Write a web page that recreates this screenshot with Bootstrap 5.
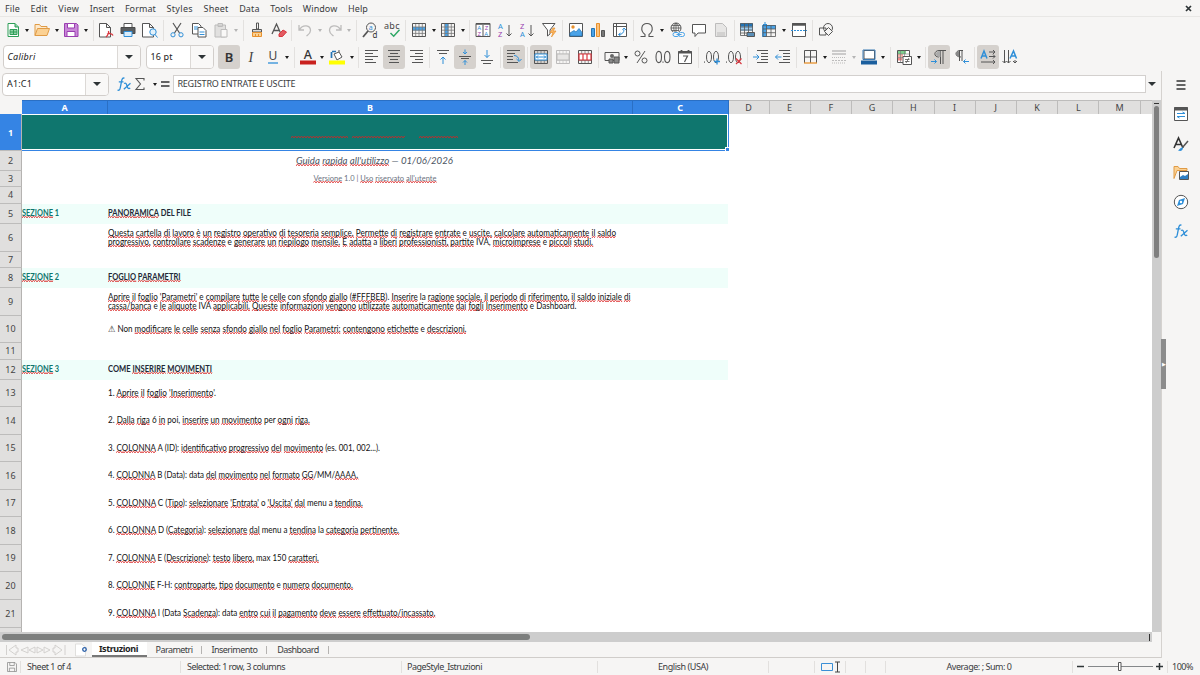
<!DOCTYPE html>
<html lang="it">
<head>
  <meta charset="UTF-8" />
  <meta name="viewport" content="width=device-width, initial-scale=1.0"/>
  <title>Registro entrate e uscite</title>
  <link href="https://cdn.jsdelivr.net/npm/bootstrap@5.3.3/dist/css/bootstrap.min.css" rel="stylesheet"/>
  <style>
    body {
      width: 1200px;
      height: 675px;
      background: #f6f5f4;
      color: #3a3c3e;
      font: 9px/12px "Noto Sans", sans-serif;
    }
    svg { display: block; flex: none; overflow: visible; }
    .menu-bar { height: 16px; padding: 1px 0 0 5px; }
    .menu-bar .menus { gap: 10.6px; }
    .tool-row { height: 27px; padding-left: 1.5px; }
    .tool-row.first { border-top: 1px solid #e8e7e5; }
    .format-row { height: 28px; }
    .tool { width: 22px; height: 24px; border-radius: 3px; flex: none; }
    .tool.on { background: #d5d1cd; }
    .tool.dim { opacity: .35; }
    .caret { width: 7.4px; flex: none; }
    .caret::after, .drop::after {
      content: "";
      border: 2.5px solid transparent;
      border-top: 3px solid #1c1c1c;
      border-bottom: 0;
    }
    .caret.dim::after { border-top-color: #b5b5b5; }
    .drop::after { border-width: 4px; border-top-width: 4.5px; border-top-color: #2e3436; border-bottom: 0; }
    .vsep { width: 4.9px; height: 21px; flex: none; }
    .vsep::after { content: ""; width: 1px; height: 100%; background: #e3e1df; }
    .caret + .vsep { margin-left: .9px; }
    .combo { height: 24px; background: #fff; border: 1px solid #d2cecb; border-radius: 4px; color: #222; overflow: hidden; }
    .combo .drop { width: 23px; height: 100%; background: #f9f8f7; border-left: 1px solid #dcd9d6; }
    .font-box { width: 138px; margin: 0 5px 0 1px; }
    .size-box { width: 68px; margin-right: 4px; }
    .name-box { width: 107px; height: 23px; margin-right: 4px; }
    .formula-bar { height: 29px; padding: 0 0 3px 2px; }
    .sum-tools { margin-left: -6px; }
    .sum-tools .tool:last-child { width: 14px; }
    .formula-input { width: 973px; height: 18px; background: #fff; border: 1px solid #d3d0ce; padding-left: 3px; margin-left: 1px; }
    .main-area { width: 1161px; flex: none; }
    .side-bar { width: 39px; border-left: 1px solid #d5d2cf; padding-top: 6px; gap: 13.3px; }
    .grip { left: 1161px; top: 339px; width: 5px; height: 50px; background: #8c8c8c; color: #fff; font-size: 5px; }
    .sheet { width: 1152px; height: 532px; overflow: hidden; background: #fff; }
    .col-heads { height: 14px; flex: none; }
    .col-heads div { background: #e0dfde; border-right: 1px solid #bdbcbb; border-top: 1px solid #bdbcbb; color: #444; flex: none; }
    .col-heads .corner { width: 22px; background: #f6f5f4; border: 0; }
    .col-heads .sel { background: #3584e4; color: #fff; font-weight: 700; border-color: #2a6fc4; }
    .grid-row { flex: none; }
    .row-head { width: 22px; background: #e0dfde; border-right: 1px solid #b5b3b1; border-bottom: 1px solid #bdbcbb; padding-top: 1px; color: #444; flex: none; }
    .row-head.sel { background: #3584e4; color: #fff; font-weight: 700; }
    .cell-a { width: 86px; padding-bottom: 1.5px; flex: none; }
    .cell-b { width: 620px; padding-bottom: 2px; flex: none; }
    .merged { width: 706px; flex: none; }
    .cells { font: 8.8px/9px Lato, Carlito, sans-serif; color: #111; white-space: pre; }
    .section .cell-a, .section .cell-b { background: #effefa; color: #1f2937; font-weight: 700; }
    .section .cell-a { color: #0f766e; }
    .title-cell { background: #0f766e; border: 1px solid #fff; border-left: 0; box-shadow: 0 1px 0 #3584e4, 1px 0 0 #3584e4; margin-bottom: 1px; }
    .handle { right: -3px; bottom: -3px; width: 5px; height: 5px; background: #3584e4; border: 1px solid #fff; }
    .subtitle { font-size: 9.8px; font-style: italic; color: #4b5563; padding-right: 1px; }
    .version { font-size: 8.2px; color: #6b7280; }
    .typo {
      background: url("data:image/svg+xml,%3Csvg xmlns='http://www.w3.org/2000/svg' width='3' height='2'%3E%3Cpath d='M-.5 2L1.5.4 3.500 2' fill='none' stroke='%23d92020' stroke-width='1'/%3E%3C/svg%3E") repeat-x left bottom / 3px 2px;
    }
    .title-cell .typo { height: 3px; margin-top: 9px; flex: none; }
    .v-track { width: 9px; background: #cdcdcd; padding: 3px 2px 0; }
    .v-track .stop { width: 5px; height: 1px; background: #333; }
    .v-track .thumb { height: 152px; margin-top: 2px; background: #7f7f7f; border-radius: 3px; }
    .h-track { width: 1152px; height: 10px; background: #cdcdcd; padding: 2px; }
    .h-track .thumb { width: 528px; height: 6px; background: #7d7f7e; border-radius: 3px; }
    .h-track .stop { width: 1px; height: 7px; background: #333; }
    .tab-row { height: 16px; border-bottom: 1px solid #d0cdca; }
    .tab-row .tab { padding: 0 9.9px; height: 15px; position: relative; }
    .tab-row .tab + .tab::after { content: ""; position: absolute; right: 0; top: 4px; width: 1px; height: 8px; background: #b5b3b1; }
    .tab-row .tab.now { background: #fff; border-bottom: 2px solid #777; font-weight: 700; color: #1e1e1e; padding: 1px 8.500px 0 7px; }
    .tab-row .tab.now + .tab { padding-left: 9px; padding-right: 9px; }
    .status-row { height: 17px; }
    .status-row > div { border-right: 1px solid #e2e0de; height: 12px; flex: none; }
  </style>
</head>
<body class="d-flex flex-column overflow-hidden m-0">

<div class="menu-bar d-flex justify-content-between align-items-center">
  <div class="menus d-flex">
    <span data-w="15">File</span><span data-w="17">Edit</span><span data-w="21">View</span>
    <span data-w="24.5">Insert</span><span data-w="31">Format</span><span data-w="26.5">Styles</span>
    <span data-w="25">Sheet</span><span data-w="20.5">Data</span><span data-w="22">Tools</span>
    <span data-w="34.5">Window</span><span data-w="20">Help</span>
  </div>
  <svg class="me-2" width="7" height="7" viewBox="0 0 7 7"><path d="M1 1l5 5M6 1L1 6" stroke="#2e3436" stroke-width="1.7"/></svg>
</div>

<div class="tool-row first d-flex align-items-center" data-tools="new v open v save v | pdf print preview | cut copy paste- v- | clone clear | undo- v- redo- v- | find spell | rows v cols v | sortdlg asc desc filter | image chart pivot | omega v link comment header- | parea freeze v split | shapes"></div>

<div class="tool-row format-row d-flex align-items-center">
  <div class="combo font-box d-flex align-items-center justify-content-between">
    <span class="ps-1 fst-italic"><span data-w="28">Calibri</span></span>
    <span class="drop d-flex align-items-center justify-content-center"></span>
  </div>
  <div class="combo size-box d-flex align-items-center justify-content-between">
    <span class="ps-1"><span data-w="22">16 pt</span></span>
    <span class="drop d-flex align-items-center justify-content-center"></span>
  </div>
  <div class="d-flex align-items-center" data-tools="bold+ italic under v | fcolor v hcolor v | left center+ right | top middle+ bottom | wrap+ | merge+ unmerge- mergered | money v percent number date | adddec deldec | indent outdent | borders v lstyle- v- bcolor v | cond v | ltr+ rtl | hdir+ vdir"></div>
</div>

<div class="d-flex flex-grow-1">
  <div class="main-area">
    <div class="formula-bar d-flex align-items-center">
      <div class="combo name-box d-flex align-items-center justify-content-between">
        <span class="ps-1"><span data-w="25">A1:C1</span></span>
        <span class="drop d-flex align-items-center justify-content-center"></span>
      </div>
      <div class="d-flex align-items-center" data-tools="fx"></div>
      <div class="sum-tools d-flex align-items-center" data-tools="sigma v equals"></div>
      <div class="formula-input d-flex align-items-center"><span data-w="118">REGISTRO ENTRATE E USCITE</span></div>
      <span class="drop d-flex justify-content-center" style="width:12px"></span>
    </div>
    <div class="d-flex">
      <div class="sheet d-flex flex-column">
        <div class="col-heads d-flex" id="colHeads"></div>
        <div id="gridRows"></div>
      </div>
      <div class="v-track"><div class="stop"></div><div class="thumb"></div></div>
    </div>
    <div class="h-track d-flex justify-content-between align-items-center"><div class="thumb"></div><div class="stop"></div></div>
    <div class="tab-row d-flex align-items-center">
      <svg width="92" height="15" viewBox="0 0 92 15" fill="none" stroke="#cfcdcb" stroke-width=".9">
        <path d="M6.500 3v10M16 3l-7 5 7 5v-3h2V6h-2zM28 5l-7 3 7 3zM35 5l-6 3 6 3zM37 5l6 3-6 3zM44 5l6 3-6 3zM55 3l7 5-7 5v-3h-2V6h2zM65 3v10"/>
        <path d="M75.500 2h6l4 3v9h-10z" fill="#fff" stroke="#dddbd9"/><circle cx="84.500" cy="7.500" r="1.800" stroke="#2a5fa8" stroke-width="1.300"/>
      </svg>
      <div class="tab now d-flex align-items-center"><span data-w="39">Istruzioni</span></div>
      <div class="tab d-flex align-items-center"><span data-w="37">Parametri</span></div>
      <div class="tab d-flex align-items-center"><span data-w="46">Inserimento</span></div>
      <div class="tab d-flex align-items-center"><span data-w="41.5">Dashboard</span></div>
    </div>
  </div>
  <div class="side-bar d-flex flex-column align-items-center" id="sideBar"></div>
</div>
<div class="grip position-absolute d-flex align-items-center justify-content-center">▶</div>

<div class="status-row d-flex align-items-center">
  <div class="d-flex align-items-center" style="width:21px;padding-left:6px" id="saveState"></div>
  <div style="width:160px;padding-left:6px"><span data-w="44">Sheet 1 of 4</span></div>
  <div style="width:221px;padding-left:6px"><span data-w="98">Selected: 1 row, 3 columns</span></div>
  <div style="width:196px;padding-left:5px"><span data-w="75">PageStyle_Istruzioni</span></div>
  <div class="text-center" style="width:171px"><span data-w="50">English (USA)</span></div>
  <div style="width:46px"></div>
  <div class="d-flex align-items-center justify-content-center" style="width:31px">
    <svg width="20" height="12" viewBox="0 0 20 12" fill="none"><path d="M1.500 2.500h11v7h-11z" stroke="#3a8fd6"/><path d="M15 1h5M15 11h5M17.500 1v10" stroke="#444"/></svg>
  </div>
  <div style="width:20px"></div>
  <div style="width:20px"></div>
  <div class="text-center" style="width:187px"><span data-w="65">Average: ; Sum: 0</span></div>
  <div class="d-flex align-items-center" style="width:95px;padding-left:4px">
    <svg width="86" height="9" viewBox="0 0 86 9" fill="none"><path d="M0 4.500h7M79 4.500h7M82.500 1v7" stroke="#2e3436" stroke-width="1.500"/><path d="M11 4.500h65" stroke="#85888a"/><path d="M41.500 .5h2.500v8h-2.500z" fill="#fff" stroke="#555"/></svg>
  </div>
  <span class="ps-1"><span data-w="21">100%</span></span>
</div>

<script>
  const k = 'stroke="#555"', b = 'stroke="#2f8fd8"', r = 'stroke="#d9363e"', o = 'stroke="#e8912d"';
  const p = (d, s) => `<path d="${d}" ${s}/>`;
  const t = (x, y, size, fill, text, more = '') => `<text x="${x}" y="${y}" font-size="${size}" fill="${fill}" stroke="none" ${more}>${text}</text>`;
  const lines = (x1, x2) => x1.map((x, i) => p(`M${x} ${1.5 + i * 3}H${x2[i]}`, k)).join('');
  const grid = p('M4.700 1.500v13M8 1.500v13M11.300 1.500v13M1.500 5h13M1.500 8.200h13M1.500 11.400h13', 'stroke="#777" stroke-width=".8"') + p('M1.500 1.500h13v13h-13z', k);
  const page = (x = 1) => p(`M${x + .5} 1.500h7l4 4v9.500h-11zM${x + 7.500} 1.500v4h4`, k + ' fill="#fff"');

  const icons = {
    new: p('M3 1.500h7l3.500 3.500v9.500H3z', 'stroke="#2f9e58" fill="#fff"') + p('M10 1.500v3.500h3.500', 'stroke="#2f9e58" fill="#8fd3a6"') + p('M5 7.500h7v5H5zM5 10h7M8.500 7.500v5', 'stroke="#2f9e58" fill="#8fd3a6"'),
    open: p('M1 13.500v-11h4.500l1.500 2h6v2', 'stroke="#e09b45" fill="#fde9cc"') + p('M1 13.500l2.500-7h12l-2.500 7z', 'stroke="#e09b45" fill="#fbd193"'),
    save: p('M1.500 1.500h12l1.500 1.500v11.500H1.500z', 'stroke="#9a3fb0" fill="#c987d8"') + p('M4.500 1.500h7v4.500h-7zM4 9.500h8v5H4z', 'stroke="#9a3fb0" fill="#fff"'),
    pdf: page() + p('M8 15c2-2 3-4 2.500-6M9 12c2-1 5-.5 6 1.500', r + ' stroke-width="1.300"'),
    print: p('M4 5.500v-4h8v4', k + ' fill="#fff"') + p('M1 5.500h14v6H1z', 'stroke="#4a4a4a" fill="#5a5d5f"') + p('M4 9.500h8v5H4z', b + ' fill="#d9ecfa"'),
    preview: page(0) + `<circle cx="11" cy="10" r="3.200" ${b} fill="#e2f1fb"/>` + p('M13 12.500l2.500 3', b),
    cut: p('M4 1l6.500 10M12 1L5.500 11', k + ' stroke-width="1.200"') + `<circle cx="4" cy="12.800" r="2.100" ${b}/><circle cx="12" cy="12.800" r="2.100" ${b}/>`,
    copy: p('M1.500 1.500h6l2.500 2.500v8H1.500z', k + ' fill="#fff"') + p('M3 5h4M3 7h4', b) + p('M7 5.500h5l3 3v6.500H7z', k + ' fill="#fff"') + p('M8.500 10h5M8.500 12.500h5', b),
    paste: p('M2 3h10.500v12H2z', k + ' fill="#bbb"') + p('M5 1.500h4.500v3H5z', k) + p('M8 7.500h6v7.500H8z', k + ' fill="#fff"'),
    clone: p('M7.500 1h2v6h-2z', k) + p('M3.500 7.500h9v2.500h-9z', k + ' fill="#ddd"') + p('M3.500 10.500h9v4h-9zM6.500 12v2.500M9.500 12v2.500', o + ' fill="#fbd193"'),
    clear: p('M1 12L5.500 2 10 12M2.500 8.500h6', k + ' stroke-width="1.300"') + p('M8 12l4-4 3.500 2-4 4.500H8z', 'stroke="#d9363e" fill="#e35b62"'),
    undo: p('M2 3v5h5M2.500 7.500C6 2 13.500 3 13.500 8.500c0 3-2 4-4 5.500', k + ' stroke-width="1.300"'),
    redo: p('M14 3v5H9M13.500 7.500C10 2 2.500 3 2.500 8.500c0 3 2 4 4 5.500', k + ' stroke-width="1.300"'),
    find: `<circle cx="9" cy="5.500" r="4.500" ${k}/>` + p('M6 9l-5 6', k + ' stroke-width="1.800"') + t(6.800, 7.800, 7, '#2f8fd8', 'a') + t(10.500, 15.800, 8, '#333', 'd'),
    spell: t(0, 7, 9, '#444', 'abc', 'textLength="15.500"') + p('M6.500 11l3.200 3.200 5.800-6.400', 'stroke="#2fa866" stroke-width="1.500"'),
    rows: p('M1 5h14v3.500H1z', 'fill="#4aa3e8"') + grid,
    cols: p('M5 1h3.500v14H5z', 'fill="#4aa3e8"') + grid,
    sortdlg: p('M1 1.500h14v13H1zM8 3v11.500', k + ' fill="#fff"') + p('M1 2h14', k + ' stroke-width="1.500"') + t(2.200, 8.200, 6, '#2f8fd8', 'A') + t(2.500, 14, 6, '#9a3fb0', 'Z') + t(9.700, 8.200, 6, '#9a3fb0', 'Z') + t(9.300, 14, 6, '#2f8fd8', 'A'),
    asc: t(1, 6.500, 7.500, '#2f8fd8', 'A') + t(1, 15, 7.500, '#9a3fb0', 'Z') + p('M12 3v11M9.500 11.500l2.500 2.500 2.500-2.500', k),
    desc: t(1, 6.500, 7.500, '#9a3fb0', 'Z') + t(1, 15, 7.500, '#2f8fd8', 'A') + p('M12 3v11M9.500 11.500l2.500 2.500 2.500-2.500', k),
    filter: p('M1.500 1.500h12.500l-5 6.500v4l-2.500 2V8z', k + ' fill="#fff"') + p('M12 6l-3 4.500h3L10.500 15l4.500-6h-3l2-3z', 'stroke="#e8912d" fill="#fbb765" stroke-width=".7"'),
    image: p('M1.500 1.500h13v13h-13z', k + ' fill="#fff"') + `<circle cx="5" cy="5" r="1.700" fill="#e8912d"/>` + p('M2 14v-3l4-2.500 2 1.500 3-3.500 3 4V14z', 'fill="#4aa3e8" stroke="#2474b5" stroke-width=".7"'),
    chart: p('M1.500 6.500h3v8h-3z', 'stroke="#2474b5" fill="#4aa3e8"') + p('M6.500 1.500h3v13h-3z', 'stroke="#e8912d" fill="#fbc27d"') + p('M11.500 8.500h3v6h-3z', k + ' fill="#777"'),
    pivot: p('M1.500 1.500h13v13h-13zM1.500 4.500h13M4.500 1.500v13', k + ' fill="#fff"') + p('M7 12.500c3 0 5-2 5-5M10.500 8L12 6l2 2M8.500 11l-2 1.500 2 1.500', b),
    omega: p('M1.500 14.500h4.500v-2C1 9 2 1.500 8 1.500s7 7.500 2 11v2h4.500', k + ' stroke-width="1.100"'),
    link: `<circle cx="7" cy="6" r="5" ${k}/>` + p('M2 6h10M3 3.500h8M3 8.500h7M7 1v9M7 1C4 4 4 8 7 11M7 1c3 3 3 6 2 8', k + ' stroke-width=".8"') + p('M4 10h11v5H4z', 'fill="#f6f5f4"') + `<rect x="4" y="10.500" width="6" height="4" rx="2" stroke="#4aa3e8"/><rect x="9.500" y="10.500" width="6" height="4" rx="2" stroke="#4aa3e8"/>` + p('M7.500 12.500h5', 'stroke="#4aa3e8"'),
    comment: p('M1.500 2.500h13v8.500H7l-3 3.500v-3.500H1.500z', k + ' fill="#fff"'),
    header: p('M2.500 1.500h7l4 4v9h-11z', k + ' fill="#ccc"') + p('M4 11h8M4 13h8', k),
    parea: p('M1 1h13v8H1z', 'fill="#9ccdf2"') + p('M1 1.500h13v3H1z', 'fill="#2474b5"') + p('M1.500 1.500h12v12h-12zM1.500 5h12M1.500 8h12M1.500 11h12M5.500 1.500v12M9.500 1.500v12', k + ' stroke-width=".8"') + p('M8 10.500h7.500v4H8z', k + ' fill="#5a8fb8"'),
    freeze: p('M1 3h14v4H1zM1 3h4.500v12H1z', 'fill="#4aa3e8"') + p('M2 3.500h12.500v11H2zM2 7h12.500M2 10.700h12.500M5.500 3.500v11M10 3.500v11', k + ' stroke-width=".8"') + p('M4 0v5M2 2.500h4', b),
    split: p('M1.500 1.500h13v13h-13z', k + ' fill="#fff"') + p('M1 2.500h14', k + ' stroke-width="2.500"') + p('M0 8.500h16', b + ' stroke-dasharray="2 1"'),
    shapes: `<circle cx="10" cy="6" r="4.500" ${k}/>` + p('M1.500 6h6.500v7H1.500z', k) + p('M10.500 5.500l4 4-4 4-4-4z', k + ' fill="#f6f5f4"'),
    bold: t(3.700, 13, 13, '#333', 'B', 'font-weight="600"'),
    italic: t(5.500, 13, 14, '#444', 'I', 'font-family="Liberation Serif" font-style="italic"'),
    under: t(3.500, 11, 12, '#444', 'U') + p('M3 14h10', b + ' stroke-width="1.300"'),
    fcolor: t(3.800, 10, 12.500, '#333', 'A', 'font-weight="500"') + p('M0 13.500h16', 'stroke="#c9211e" stroke-width="4"'),
    hcolor: p('M5 5l5-2 3 5-5 3zM10 3V1', k + ' fill="#fff"') + p('M3 2.500h4M2.500 3v6', 'stroke="#2474b5" stroke-width="1.700"') + p('M0 13.500h16', 'stroke="#ffff00" stroke-width="4"'),
    left: lines([1, 1, 1, 1, 1], [14, 9, 14, 9, 12]),
    center: lines([2, 4, 2, 4, 3], [14, 12, 14, 12, 13]),
    right: lines([2, 7, 2, 7, 4], [15, 15, 15, 15, 15]),
    top: p('M2 1.500h12M4 4.500h8', k) + p('M8 15V8M5.500 10.500L8 8l2.500 2.500', b),
    middle: p('M2 7.500h12M4 9.500h8', k) + p('M8 .5V5M6 3l2 2 2-2M8 16v-4.500M6 13.500l2-2 2 2', b),
    bottom: p('M2 11.500h12M4 14.500h8', k) + p('M8 1v7.500M5.500 6L8 8.500 10.500 6', b),
    wrap: lines([1, 1, 1, 1, 1], [14, 9, 7, 7, 12]) + p('M8 6.500c3 0 5 2 5 5.500M10.500 10l2.700 2.500L15.500 10', b),
    merge: grid + p('M2 5h12v6H2z', 'fill="#fff"' + b) + p('M3 8h10M5 6.500L3.500 8 5 9.500M11 6.500L12.500 8 11 9.500', b),
    unmerge: grid + p('M2 5h12v6H2z', 'fill="#ccc" ' + k),
    mergered: grid + p('M2 5h12v6H2zM6 5v6M10 5v6', 'fill="#fff" ' + r + ' stroke-width="1.200"'),
    money: p('M1 3.500h14v8H1z', k) + `<circle cx="8" cy="7" r="2" fill="#666"/>` + p('M5 10h4v4H5zM10 8h5v6h-5z', 'fill="#888" stroke="#555"'),
    percent: `<circle cx="4.500" cy="4.500" r="2.500" ${k}/><circle cx="11.500" cy="11.500" r="2.500" ${k}/>` + p('M12 2L4 14', k),
    number: p('M1 8c0-7.500 5.500-7.500 5.500 0s-5.500 7.500-5.500 0M9.500 8c0-7.500 5.500-7.500 5.500 0s-5.500 7.500-5.500 0M8 12.500v1.200', k + ' stroke-width="1.100"'),
    date: p('M1.500 2.500h13v12h-13z', k + ' fill="#fff"') + p('M1 3.500h14M4.500 1v3M11.500 1v3', k + ' stroke-width="1.800"') + p('M6 7h4.500L7.500 13', k + ' stroke-width="1.200"'),
    adddec: p('M2.500 8c0-7.500 5-7.500 5 0s-5 7.500-5 0M9.500 8c0-7.500 5-7.500 5 0s-5 7.500-5 0M.5 12.500v1.200', k) + p('M13 9.500v6M10 12.500h6', b + ' stroke-width="1.300"'),
    deldec: p('M2.500 8c0-7.500 5-7.500 5 0s-5 7.500-5 0M9.500 8c0-7.500 5-7.500 5 0s-5 7.500-5 0M.5 12.500v1.200', k) + p('M10 9.500l5.500 5.500M15.500 9.500L10 15', r + ' stroke-width="1.200"'),
    indent: lines([4, 8, 8, 8, 4], [15, 15, 15, 15, 15]) + p('M0 8h6M3.500 5.500L6 8l-2.500 2.500', b),
    outdent: lines([4, 8, 8, 8, 4], [15, 15, 15, 15, 15]) + p('M6.500 8h-6M3 5.500L.5 8 3 10.500', b),
    borders: p('M2.500 14V1.500h12V14M8.500 1.500V14M2.500 8h12', k) + p('M2 14h13', o + ' stroke-width="1.300"'),
    lstyle: p('M1 2h14M1 5h14', k + ' stroke-width="1.500"') + p('M1 8.500h14M1 14h14', k + ' stroke-dasharray="1 1"') + p('M1 11.500h14', k + ' stroke-dasharray="2 1"'),
    bcolor: p('M3 1.500h10.500v8.500H3z', k + ' fill="#fff"') + p('M2 1h12v9.500H2z', 'stroke="#3a7ab5"') + p('M0 13.500h16', 'stroke="#1b5f9e" stroke-width="4"'),
    cond: p('M1.500 1.500h12v12h-12z', k + ' fill="#fff"') + p('M2 2h8v3H2z', 'fill="#7ed08f"') + p('M2 5h5v3H2z', 'fill="#f3b0a8"') + p('M2 8.500h4v3H2z', 'fill="#f08a8a"') + p('M1.500 5h12M1.500 8.500h12M4.500 1.500v12M8.500 1.500v12', 'stroke="#777" stroke-width=".6"') + p('M7 7.500h8.500v8H7z', k + ' fill="#fff"') + p('M9 10.500h4.500M9 12.500h4.500M13 9l-3 5', k + ' stroke-width=".8"'),
    ltr: p('M8 8C2 8 3 1.500 8 1.500h7M9.500 1.500V15M12 1.500V15', k) + p('M8 2h1.500v6H8C4 7 4 3 8 2z', 'fill="#aaa"') + p('M0 12.500h5.500M3.500 10.500l2 2-2 2', b),
    rtl: p('M8 8C1 8 2 1.500 7 1.500h3M6.500 1.500V12M9 1.500V12', k) + p('M6 2v6C2 7 2 3 6 2z', 'fill="#888"') + p('M16 12.500h-5.500M12.500 10.500l-2 2 2 2', b),
    hdir: p('M1 9.500L4 2l3 7.500M2 7h4', b + ' stroke-width="1.500"') + p('M9 3h6M9 7.500h6M1 13h14M13 1l2 2-2 2M13 5.500l2 2-2 2M13 11l2 2-2 2', k),
    vdir: p('M8 9.500L11.500 2l3 7.500M9 7h4.500', b + ' stroke-width="1.500"') + p('M2.500 1v13M6.500 1v13M13 11v3M.5 12l2 2 2-2M4.500 12l2 2 2-2M11 12l2 2 2-2', k),
    fx: p('M8.500 2.300C6.800 1.200 6 3 5.600 5L4.200 12c-.3 1.800-1.200 2.700-2.700 2M2.800 5.800h4.700', b + ' stroke-width="1.300"') + p('M8 7.500c2-1 2.500.5 3 2.500s1.500 3.500 3.200 2M14.500 7.300L7.800 13.200', b + ' stroke-width="1.300"'),
    sigma: p('M12 4.500V2.500H4L8.500 8 4 13.500h8v-2', k + ' stroke-width="1.100"'),
    equals: p('M4 6h8.500M4 10h8.500', 'stroke="#333" stroke-width="1.700"'),
    menu: p('M3.500 4h9M3.500 8h9M3.500 12h9', 'stroke="#333" stroke-width="1.500"'),
    props: p('M1.500 1.500h13v13h-13z', k + ' fill="#fff"') + p('M1 3h14', k + ' stroke-width="3"') + p('M4 7.500h8M4 10.500h8M9.500 6L12 7.500M6.500 12L4 10.500', b),
    styles: p('M1 12L5.500 2 10 12M2.500 8.500h6', 'stroke="#333" stroke-width="1.600"') + p('M15 5l-5.500 6.500', k + ' stroke-width="1.500"') + p('M5 14.500c3 1 5 0 5-3-2-.5-3 1-5 3z', 'fill="#2f8fd8"'),
    gallery: p('M1 13.500v-12h4l1.500 2H14v2H4z', 'stroke="#e09b45" fill="#fbd193"') + p('M6.500 6.500h9v8h-9z', 'stroke="#555" fill="#fff"') + p('M7 14v-2l3-2 2 1 3-2v5z', 'fill="#2f7fc4"'),
    navigator: `<circle cx="8" cy="8" r="6.700" ${k} fill="#fff"/>` + p('M12 4l-2 6-6 2 2-6z', 'fill="#2f8fd8"') + '<circle cx="8" cy="8" r="1.200" fill="#fff"/>',
    disk: p('M2 2h10l2 2v10H2zM5 2v4h6V2M4.500 14V9.500h7V14', 'stroke="#8a8a8a"')
  };

  function icon(name, size = 16) {
    return `<svg width="${size}" height="${size}" viewBox="0 0 16 16" fill="none">${icons[name]}</svg>`;
  }

  // "v" is a dropdown arrow, "|" a separator, "+" marks a pressed button, "-" a disabled one
  document.querySelectorAll('[data-tools]').forEach(bar => {
    bar.innerHTML += bar.dataset.tools.split(' ').map(item => {
      if (item === '|') return '<span class="vsep d-flex justify-content-center"></span>';
      const name = item.replace(/[+-]$/, '');
      const state = item.endsWith('+') ? 'on' : item.endsWith('-') ? 'dim' : '';
      if (name === 'v') return `<span class="caret ${state} d-flex justify-content-center"></span>`;
      return `<span class="tool ${state} d-flex align-items-center justify-content-center">${icon(name)}</span>`;
    }).join('');
  });
  document.getElementById('sideBar').innerHTML = ['menu', 'props', 'styles', 'gallery', 'navigator', 'fx'].map(n => icon(n)).join('');
  document.getElementById('saveState').innerHTML = icon('disk', 12);

  // Column headers
  const cols = [['A', 86], ['B', 525], ['C', 95.5], ['D', 41], ['E', 41], ['F', 41.5], ['G', 41], ['H', 41.5], ['I', 41], ['J', 41.5], ['K', 41.2], ['L', 41.2], ['M', 41.2], ['', 12]];
  document.getElementById('colHeads').innerHTML = '<div class="corner"></div>' + cols.map(([name, w], i) =>
    `<div class="d-flex align-items-center justify-content-center ${i < 3 ? 'sel' : ''}" style="width:${w}px">${name}</div>`).join('');

  // Pieces are flagged by the spell checker unless they start with "_"; "^" joins two pieces without a space
  const piece = w => w[0] === '_' ? w.slice(1) : `<span class="typo">${w}</span>`;
  const words = text => text.split(' ').map(w => w.split('^').map(piece).join('')).join(' ');
  const line = ([text, w]) => `<div><span data-w="${w}">${words(text)}</span></div>`;

  const rows = [
    { h: 37, title: true },
    { h: 19.5, cls: 'subtitle', mid: ["Guida rapida all'utilizzo _— _01/06/2026", 157] },
    { h: 16.5, cls: 'version', mid: ["Versione _1.0 _| Uso riservato all'utente", 123] },
    { h: 16.5 },
    { h: 20, a: 'SEZIONE _1', b: [['PANORAMICA _DEL _FILE', 83]] },
    { h: 28, b: [
      ['Questa cartella di lavoro è un registro operativo di tesoreria semplice. Permette di registrare entrate _e uscite, calcolare automaticamente il saldo', 508],
      ['progressivo, controllare scadenze _e generare un riepilogo mensile. È adatta _a liberi professionisti, partite _IVA, microimprese _e piccoli studi.', 485]] },
    { h: 16 },
    { h: 20, a: 'SEZIONE _2', b: [['FOGLIO PARAMETRI', 72.5]] },
    { h: 28, b: [
      ["Aprire il foglio 'Parametri' _e compilare tutte le celle _con sfondo giallo _(^#FFFBEB^_). Inserire _la ragione sociale, il periodo di riferimento, il saldo iniziale di", 522.5],
      ['cassa/banca _e le aliquote _IVA applicabili. Queste informazioni vengono utilizzate automaticamente dai fogli Inserimento _e _Dashboard.', 468.5]] },
    { h: 27, b: [['_⚠ _Non modificare le celle senza sfondo giallo nel foglio Parametri: contengono etichette _e descrizioni.', 358.5]] },
    { h: 17 },
    { h: 20, a: 'SEZIONE _3', b: [['_COME INSERIRE MOVIMENTI', 104]] },
    { h: 27, b: [["_1. Aprire il foglio 'Inserimento^_'.", 108]] },
    { h: 28, b: [['_2. Dalla riga _6 in _poi, inserire un movimento _per ogni riga.', 202]] },
    { h: 27, b: [['_3. COLONNA _A _(ID): identificativo progressivo del movimento _(es. _001, _002...).', 272]] },
    { h: 28, b: [['_4. COLONNA _B _(Data): _data del movimento nel formato GG^_/MM/^AAAA.', 250]] },
    { h: 27.5, b: [["_5. COLONNA _C _(^Tipo^_): selezionare 'Entrata' _o 'Uscita' dal _menu _a tendina.", 255]] },
    { h: 27.5, b: [['_6. COLONNA _D _(^Categoria^_): selezionare dal _menu _a tendina _la categoria pertinente.', 291]] },
    { h: 27.5, b: [['_7. COLONNA _E _(^Descrizione^_): testo libero, _max _150 caratteri.', 211]] },
    { h: 27.5, b: [['_8. COLONNE _F-H: controparte, tipo documento _e numero documento.', 245]] },
    { h: 28, b: [['_9. COLONNA _I _(Data Scadenza^_): _data entro cui il pagamento deve essere effettuato/incassato.', 327.5]] },
    { h: 8 }
  ];

  document.getElementById('gridRows').innerHTML = rows.map((row, i) => {
    let cells = '';
    if (row.title) {
      cells = `<div class="merged title-cell position-relative d-flex align-items-center justify-content-center">
        <span class="typo" style="width:57px"></span><span class="typo" style="width:53px;margin-left:4px"></span>
        <span class="typo" style="width:39px;margin-left:14px"></span><span class="handle position-absolute"></span></div>`;
    } else if (row.mid) {
      cells = `<div class="merged ${row.cls} d-flex align-items-center justify-content-center">${line(row.mid)}</div>`;
    } else if (row.b) {
      cells = `<div class="cell-a d-flex align-items-center">${row.a ? line([row.a, 37]) : ''}</div>
        <div class="cell-b d-flex flex-column justify-content-center">${row.b.map(line).join('')}</div>`;
    }
    return `<div class="grid-row d-flex ${row.a ? 'section' : ''}" style="height:${row.h}px">
      <div class="row-head d-flex align-items-center justify-content-center ${i ? '' : 'sel'}">${row.h > 10 ? i + 1 : ''}</div>
      <div class="cells d-flex">${cells}</div></div>`;
  }).join('');

  // Fit each label to its width: cell text is condensed, interface text is tracked
  document.querySelectorAll('[data-w]').forEach(el => {
    el.style.whiteSpace = 'pre';
    el.style.display = 'inline-block';
    const natural = el.getBoundingClientRect().width;
    if (el.closest('.cells')) {
      el.style.transformOrigin = el.closest('.merged') ? 'center' : 'left';
      el.style.transform = `scaleX(${el.dataset.w / natural})`;
    } else {
      el.style.letterSpacing = (el.dataset.w - natural) / el.textContent.length + 'px';
    }
  });
</script>

<script src="https://cdn.jsdelivr.net/npm/bootstrap@5.3.3/dist/js/bootstrap.bundle.min.js"></script>
</body>
</html>
